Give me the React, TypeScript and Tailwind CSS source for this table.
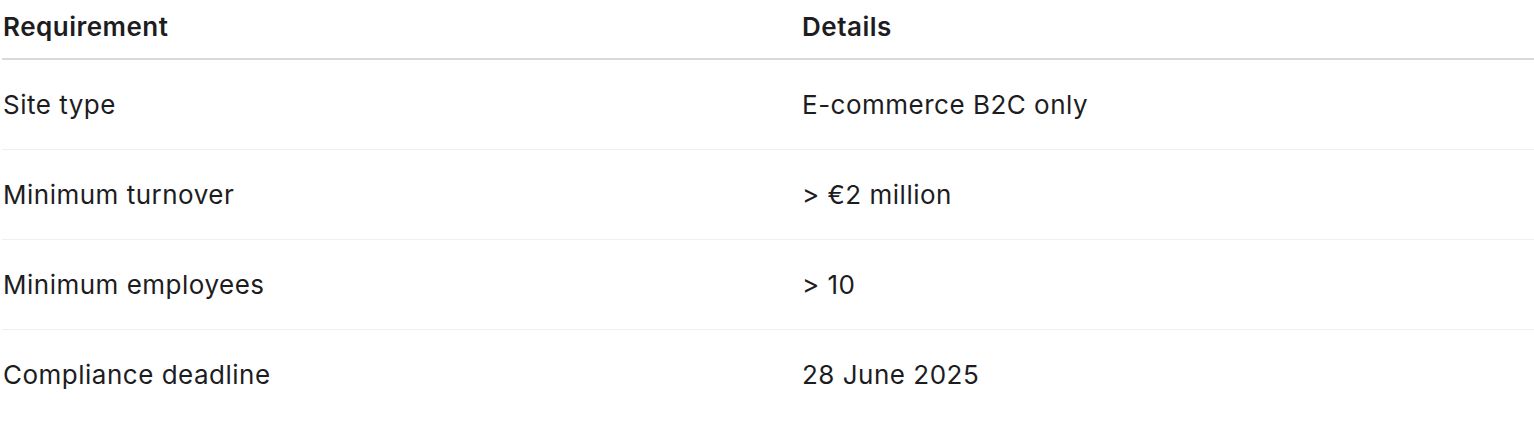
const rows = [
  { req: "Site type", details: "E-commerce B2C only" },
  { req: "Minimum turnover", details: "> €2 million" },
  { req: "Minimum employees", details: "> 10" },
  { req: "Compliance deadline", details: "28 June 2025" },
];

export default function App() {
  return (
    <div className="bg-white pl-[2px] font-['Inter',sans-serif] text-[26px] tracking-[0.5px] text-[#1d1d1f]">
      <table className="w-full border-collapse text-left">
        <thead>
          <tr className="border-b-2 border-[#d9d9d9]">
            <th className="h-[59px] w-[800px] pl-px pb-[5px] align-middle font-semibold">Requirement</th>
            <th className="h-[59px] pb-[5px] align-middle font-semibold">Details</th>
          </tr>
        </thead>
        <tbody>
          {rows.map((r, i) => (
            <tr key={r.req} className={i < rows.length - 1 ? "border-b border-[#efefef]" : ""}>
              <td className="h-[90px] pl-px align-middle font-normal">{r.req}</td>
              <td className="h-[90px] align-middle font-normal">{r.details}</td>
            </tr>
          ))}
        </tbody>
      </table>
    </div>
  );
}
